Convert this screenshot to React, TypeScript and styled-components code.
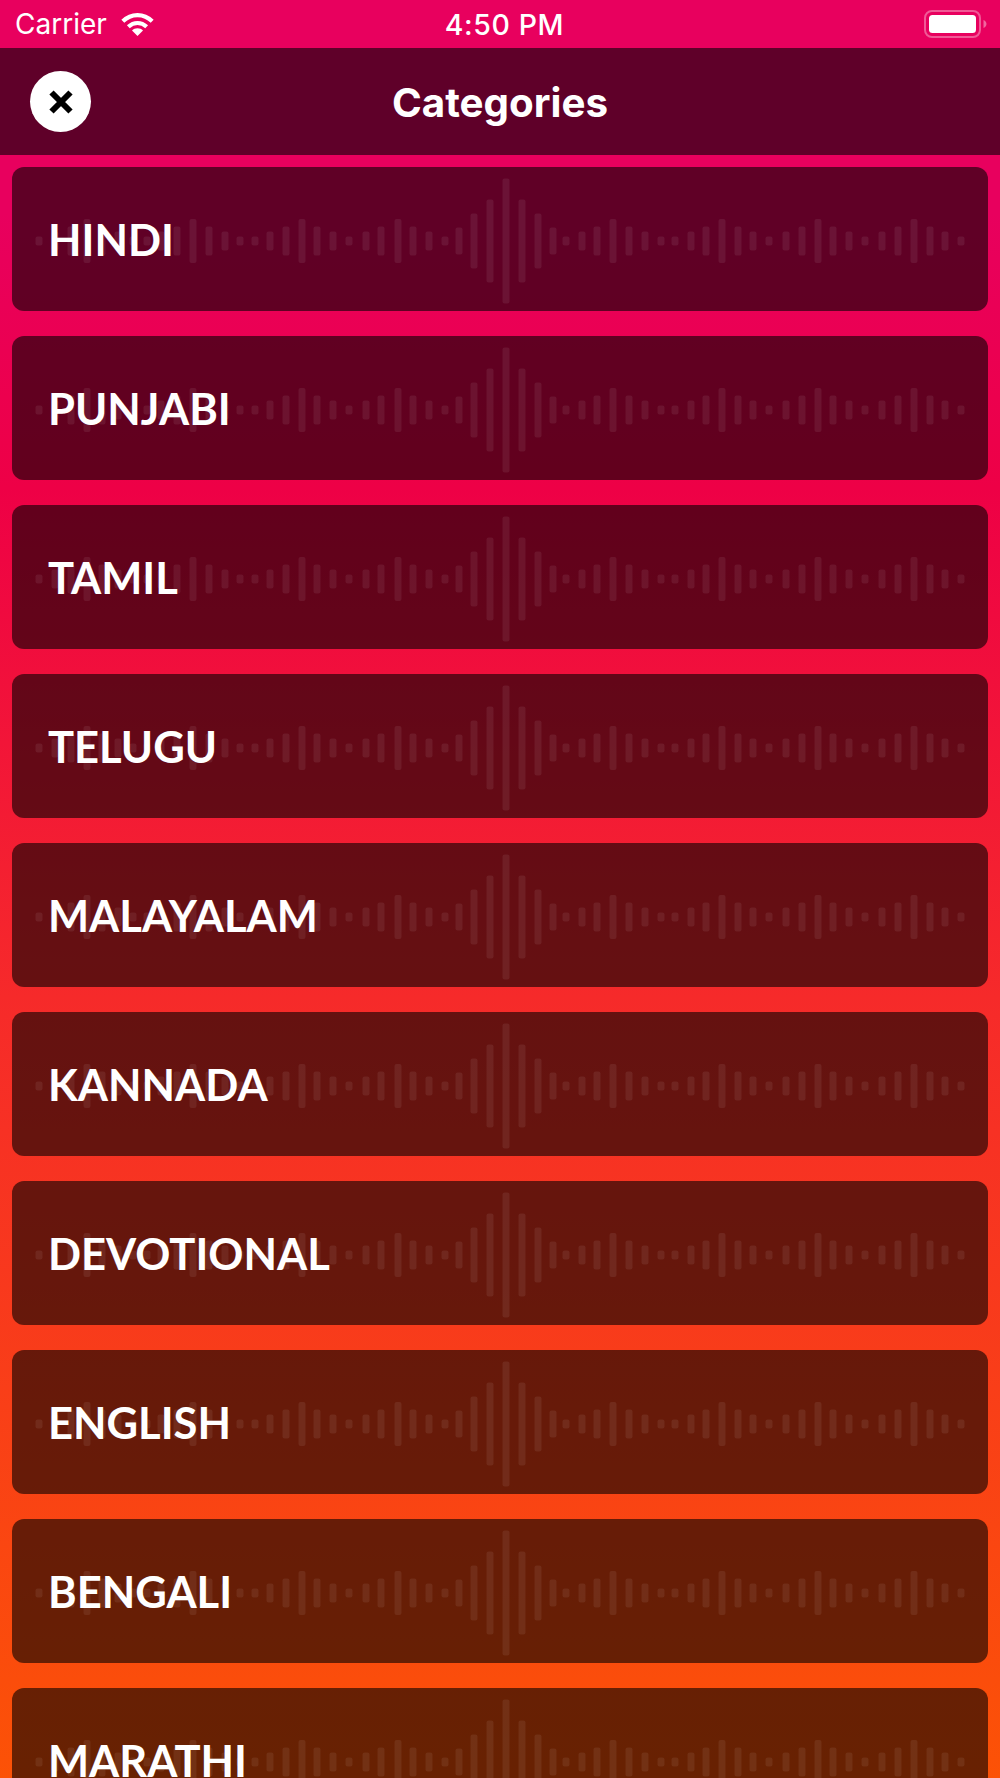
import styled, { createGlobalStyle } from 'styled-components';

const CATEGORIES = [
  'HINDI',
  'PUNJABI',
  'TAMIL',
  'TELUGU',
  'MALAYALAM',
  'KANNADA',
  'DEVOTIONAL',
  'ENGLISH',
  'BENGALI',
  'MARATHI',
];

// [centre x on the page, bar height]
const BARS: [number, number][] = [
  [39, 9], [55, 19], [71, 29], [87, 44], [102, 29], [118, 19], [133, 9],
  [147, 9], [161, 19], [177, 29], [193, 44], [209, 29], [225, 19], [240, 9],
  [255, 9], [270, 19], [286, 29], [302, 44], [317, 29], [333, 19], [349, 9],
  [366, 19], [381, 29], [398, 44], [413, 29], [429, 19], [445, 9],
  [459, 27], [474, 55], [490, 83], [506, 125], [522, 83], [538, 55], [553, 27],
  [566, 9], [582, 19], [597, 29], [613, 44], [629, 29], [645, 19], [661, 9],
  [675, 9], [691, 19], [706, 29], [722, 44], [738, 29], [753, 19], [769, 9],
  [786, 19], [802, 29], [818, 44], [833, 29], [849, 19], [865, 9],
  [882, 19], [898, 29], [914, 44], [930, 29], [945, 19], [961, 9],
];

const GlobalStyle = createGlobalStyle`
  html, body {
    margin: 0;
    padding: 0;
  }
`;

const Screen = styled.div`
  width: 1000px;
  height: 1778px;
  overflow: hidden;
  display: flex;
  flex-direction: column;
  background: linear-gradient(
    180deg,
    #e8005e 0%,
    #e8005e 12%,
    #ee0046 27.5%,
    #f62a2a 56%,
    #fb4d0b 94.5%,
    #fc5206 100%
  );
`;

const StatusBar = styled.div`
  height: 48px;
  flex: none;
  display: grid;
  grid-template-columns: 1fr auto 1fr;
  align-items: center;
  padding: 0 12px 0 15px;
  color: white;
  font-family: Inter, 'Liberation Sans', sans-serif;
  font-size: 28px;
`;

const Carrier = styled.div`
  display: flex;
  align-items: center;
  gap: 14px;
`;

const Clock = styled.span`
  margin-left: 6px;
  font-size: 28.5px;
  font-weight: 500;
  letter-spacing: 0.6px;
`;

const Battery = styled.svg`
  justify-self: end;
`;

const Header = styled.div`
  height: 107px;
  flex: none;
  position: relative;
  display: flex;
  align-items: center;
  justify-content: center;
  background: #5f0029;
`;

const Title = styled.h1`
  margin: 0;
  padding-top: 2px;
  color: white;
  font-family: Inter, 'Liberation Sans', sans-serif;
  font-size: 40.3px;
  font-weight: 700;
`;

const CloseButton = styled.button`
  position: absolute;
  left: 30px;
  top: 23px;
  width: 61px;
  height: 61px;
  padding: 0;
  border: none;
  border-radius: 50%;
  background: white;
  display: flex;
  align-items: center;
  justify-content: center;
`;

const List = styled.div`
  display: flex;
  flex-direction: column;
  gap: 25.5px;
  padding: 12.3px 12px 0;
`;

const Card = styled.div`
  height: 143.5px;
  flex: none;
  position: relative;
  display: flex;
  align-items: center;
  padding-left: 36px;
  border-radius: 12px;
  background: rgba(0, 0, 0, 0.59);
`;

const Wave = styled.svg`
  position: absolute;
  inset: 0;
  fill: rgba(255, 255, 255, 0.075);
`;

const Name = styled.span`
  position: relative;
  color: white;
  font-family: Lato, 'Liberation Sans', sans-serif;
  font-size: 43.5px;
  font-weight: 700;
`;

const Waveform = () => (
  <Wave width="976" height="144" viewBox="0 0 976 144">
    {BARS.map(([x, h]) => (
      <rect key={x} x={x - 15.5} y={74 - h / 2} width="7" height={h} rx="2" />
    ))}
  </Wave>
);

const App = () => (
  <Screen>
    <GlobalStyle />
    <StatusBar>
      <Carrier>
        Carrier
        <svg width="33" height="24" viewBox="0 0 36 26" fill="none" stroke="white" strokeWidth="4.5">
          <path d="M2 10 C11 1 25 1 34 10" />
          <path d="M8 16 C14 10.5 22 10.5 28 16" />
          <path d="M18 26 L12 20 C15 17 21 17 24 20 Z" fill="white" stroke="none" />
        </svg>
      </Carrier>
      <Clock>4:50 PM</Clock>
      <Battery width="64" height="28" viewBox="0 0 64 28">
        <rect x="1" y="1" width="55" height="26" rx="7" fill="none" stroke="white" strokeOpacity="0.35" strokeWidth="2" />
        <rect x="5" y="5" width="47" height="18" rx="3.5" fill="white" />
        <path d="M59.5 10 C61.5 11 62.5 12.5 62.5 14 C62.5 15.5 61.5 17 59.5 18 Z" fill="white" fillOpacity="0.4" />
      </Battery>
    </StatusBar>
    <Header>
      <CloseButton aria-label="Close">
        <svg width="26" height="26" viewBox="0 0 26 26" stroke="black" strokeWidth="6">
          <path d="M3.5 3.5 L22.5 22.5 M22.5 3.5 L3.5 22.5" />
        </svg>
      </CloseButton>
      <Title>Categories</Title>
    </Header>
    <List>
      {CATEGORIES.map((name) => (
        <Card key={name}>
          <Waveform />
          <Name>{name}</Name>
        </Card>
      ))}
    </List>
  </Screen>
);

export default App;
